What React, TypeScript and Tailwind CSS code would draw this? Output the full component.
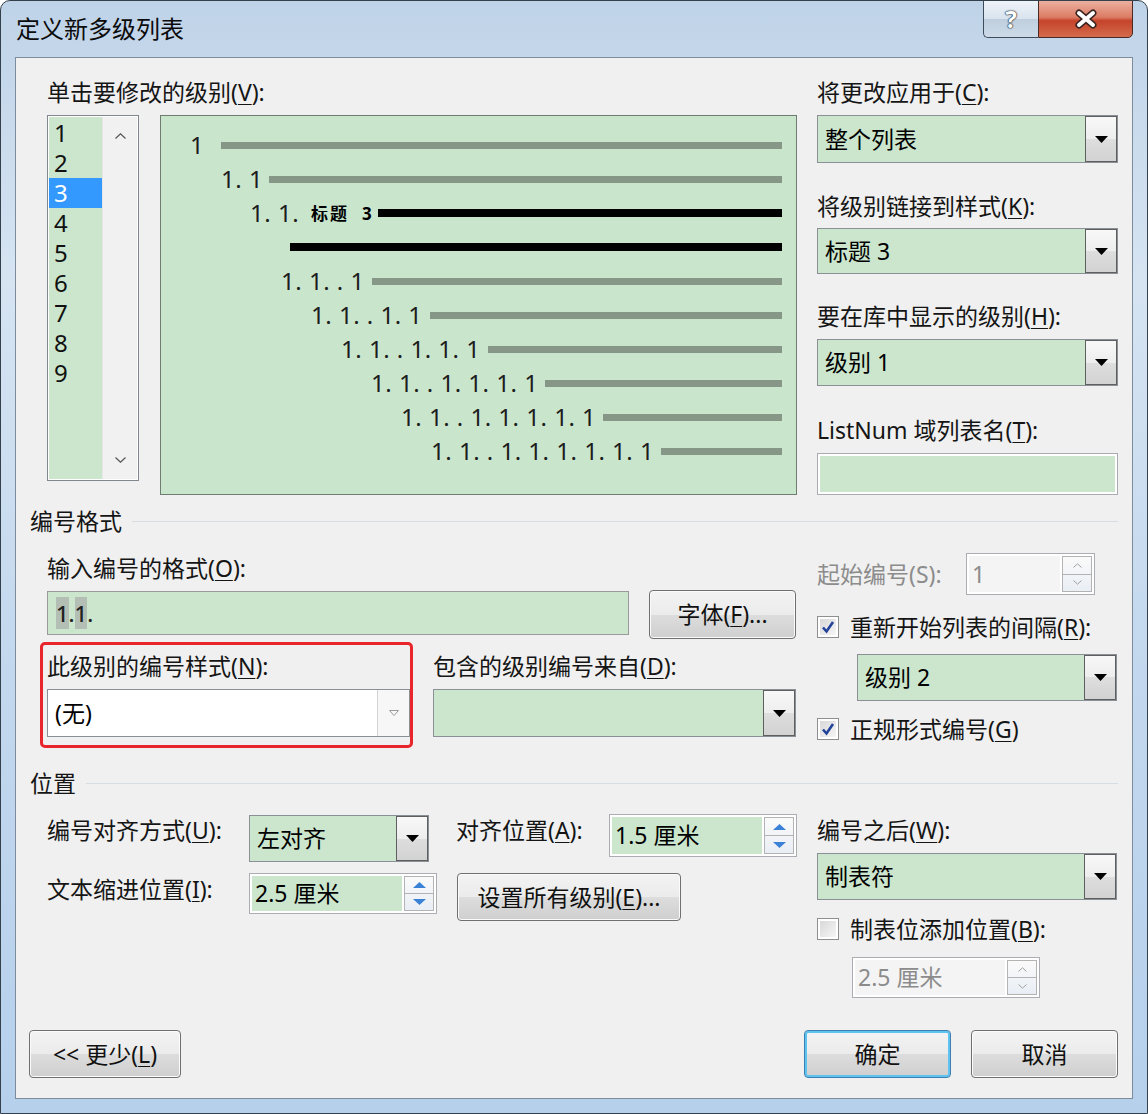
import React from "react";

const M = ({ children }: { children: React.ReactNode }) => (
  <span className="underline decoration-1 underline-offset-[3px]">{children}</span>
);

const Label = ({
  children,
  className = "",
  dim,
}: {
  children: React.ReactNode;
  className?: string;
  dim?: boolean;
}) => (
  <div
    className={
      (dim ? "text-[#8c8c8c] " : "text-[#151515] ") +
      "flex h-[30px] items-center whitespace-nowrap text-[23px] leading-none " +
      className
    }
  >
    {children}
  </div>
);

const DropBtn = ({ disabled }: { disabled?: boolean }) =>
  disabled ? (
    <div className="flex w-[32px] items-center justify-center border-l border-[#d4d4d4] bg-[#f7f7f7]">
      <svg width="10" height="6" viewBox="0 0 10 6">
        <path d="M0.5 0.5h9L5 5.5z" fill="none" stroke="#9a9a9a" strokeWidth="1" />
      </svg>
    </div>
  ) : (
    <div className="flex w-[32px] items-center justify-center border border-[#5f5f5f] bg-[linear-gradient(#f8f8f8,#ededed_50%,#dedede_50%,#d2d2d2)]">
      <svg width="13" height="7" viewBox="0 0 13 7">
        <path d="M0 0h13L6.5 7z" fill="#000" />
      </svg>
    </div>
  );

const Combo = ({
  value,
  className = "",
  white,
}: {
  value: React.ReactNode;
  className?: string;
  white?: boolean;
}) => (
  <div className={"flex border border-[#8b9096] " + className}>
    <div
      className={
        (white ? "bg-white " : "bg-[#cbe6cd] ") +
        "flex flex-1 items-center whitespace-nowrap pl-[7px] text-[23px] leading-none"
      }
    >
      {value}
    </div>
    <DropBtn disabled={white} />
  </div>
);

const Up = ({ disabled }: { disabled?: boolean }) =>
  disabled ? (
    <svg width="9" height="5" viewBox="0 0 9 5">
      <path d="M0.5 4.5L4.5 0.8L8.5 4.5" fill="none" stroke="#a0a0a0" strokeWidth="1" />
    </svg>
  ) : (
    <svg width="13" height="6" viewBox="0 0 13 6">
      <path d="M0 6L6.5 0L13 6z" fill="#3b82d6" />
    </svg>
  );

const Down = ({ disabled }: { disabled?: boolean }) =>
  disabled ? (
    <svg width="9" height="5" viewBox="0 0 9 5">
      <path d="M0.5 0.5L4.5 4.2L8.5 0.5" fill="none" stroke="#a0a0a0" strokeWidth="1" />
    </svg>
  ) : (
    <svg width="13" height="6" viewBox="0 0 13 6">
      <path d="M0 0L13 0L6.5 6z" fill="#3b82d6" />
    </svg>
  );

const Spin = ({
  value,
  className = "",
  disabled,
}: {
  value: string;
  className?: string;
  disabled?: boolean;
}) => (
  <div className={"flex border border-[#abadb3] bg-white p-[2px] " + className}>
    <div
      className={
        (disabled ? "bg-[#f4f4f4] text-[#8c8c8c] " : "bg-[#cbe6cd] text-black ") +
        "flex flex-1 items-center whitespace-nowrap pl-[3px] text-[23px] leading-none"
      }
    >
      {value}
    </div>
    <div className="ml-[2px] flex w-[30px] flex-col border border-[#b3b3b3] bg-[linear-gradient(#fafafa,#e9eef5)]">
      <div className="flex flex-1 items-center justify-center border-b border-[#b3b3b3]">
        <Up disabled={disabled} />
      </div>
      <div className="flex flex-1 items-center justify-center">
        <Down disabled={disabled} />
      </div>
    </div>
  </div>
);

const Check = ({ checked }: { checked?: boolean }) => (
  <div className="flex h-[22px] w-[22px] items-center justify-center border border-[#8e8f8f] bg-white p-[2px]">
    <div className="flex h-full w-full items-center justify-center bg-[linear-gradient(135deg,#d8d8d8,#f6f6f6)]">
      {checked && (
        <svg width="14" height="14" viewBox="0 0 14 14">
          <path d="M2 7.5L5.5 11.5L12 2" fill="none" stroke="#23429a" strokeWidth="2.6" />
        </svg>
      )}
    </div>
  </div>
);

const Btn = ({
  children,
  className = "",
  focus,
}: {
  children: React.ReactNode;
  className?: string;
  focus?: boolean;
}) => (
  <div
    className={
      (focus
        ? "border-[#3c7fb1] shadow-[inset_0_0_0_2px_#5ec3ee] "
        : "border-[#707070] shadow-[inset_0_0_0_1px_#fbfbfb] ") +
      "flex items-center justify-center whitespace-nowrap rounded-[4px] border bg-[linear-gradient(#f3f3f3,#ebebeb_50%,#dddddd_50%,#cfcfcf)] text-[23px] leading-none text-[#111] " +
      className
    }
  >
    {children}
  </div>
);

const Section = ({ title }: { title: string }) => (
  <div className="flex h-[30px] items-center">
    <span className="whitespace-nowrap text-[23px] leading-none text-[#151515]">{title}</span>
    <div className="ml-[10px] h-px flex-1 bg-[#d5dde3]" />
  </div>
);

const levels = ["1", "2", "3", "4", "5", "6", "7", "8", "9"];

const rows = [
  { pl: "pl-[29px]", text: "1", line: "ml-[17px] h-[7px] bg-[#879787]" },
  { pl: "pl-[60px]", text: "1. 1", line: "ml-[6px] h-[7px] bg-[#879787]" },
  { pl: "pl-[89px]", text: "1. 1.", heading: true, line: "ml-[4px] h-[8px] bg-black" },
  { pl: "pl-[129px]", text: "", line: "h-[8px] bg-black" },
  { pl: "pl-[120px]", text: "1. 1. . 1", line: "ml-[7px] h-[7px] bg-[#879787]" },
  { pl: "pl-[150px]", text: "1. 1. . 1. 1", line: "ml-[7px] h-[7px] bg-[#879787]" },
  { pl: "pl-[180px]", text: "1. 1. . 1. 1. 1", line: "ml-[7px] h-[7px] bg-[#879787]" },
  { pl: "pl-[210px]", text: "1. 1. . 1. 1. 1. 1", line: "ml-[7px] h-[7px] bg-[#879787]" },
  { pl: "pl-[240px]", text: "1. 1. . 1. 1. 1. 1. 1", line: "ml-[7px] h-[7px] bg-[#879787]" },
  { pl: "pl-[270px]", text: "1. 1. . 1. 1. 1. 1. 1. 1", line: "ml-[7px] h-[7px] bg-[#879787]" },
];

const ListBox = () => (
  <div className="flex h-[366px] w-[92px] border border-[#82878f] bg-white p-[1px]">
    <div className="w-[53px] bg-[#cbe6cd] pt-[1px]">
      {levels.map((n) => (
        <div
          key={n}
          className={
            n === "3"
              ? "h-[30px] bg-[#3399ff] pl-[5px] text-[24px] leading-[30px] text-white"
              : "h-[30px] pl-[5px] text-[24px] leading-[30px] text-[#111]"
          }
        >
          {n}
        </div>
      ))}
    </div>
    <div className="flex flex-1 flex-col items-center justify-between border-l border-[#e6e6e6] bg-[#f1f1f1] pb-[16px] pt-[16px]">
      <svg width="11" height="6" viewBox="0 0 11 6">
        <path d="M0.5 5.5L5.5 0.8L10.5 5.5" fill="none" stroke="#555" strokeWidth="1.2" />
      </svg>
      <svg width="11" height="6" viewBox="0 0 11 6">
        <path d="M0.5 0.5L5.5 5.2L10.5 0.5" fill="none" stroke="#555" strokeWidth="1.2" />
      </svg>
    </div>
  </div>
);

const Preview = () => (
  <div className="h-[380px] w-[637px] border border-[#6f7c72] bg-[#c9e6cc] pr-[14px] pt-[12px]">
    {rows.map((r, i) => (
      <div key={i} className={"flex h-[34px] items-center " + r.pl}>
        {r.text && (
          <span className="whitespace-pre text-[24px] leading-none tracking-[0.5px] text-[#1c1c1c]">
            {r.text}
          </span>
        )}
        {r.heading && (
          <span className="ml-[12px] whitespace-pre text-[17px] font-bold leading-none tracking-[2px] text-black">
            标题  3
          </span>
        )}
        <div className={"flex-1 " + r.line} />
      </div>
    ))}
  </div>
);

export default function App() {
  return (
    <div className="relative h-[1114px] w-[1148px] overflow-hidden rounded-t-[10px] border border-[#34404c] bg-[linear-gradient(180deg,#bfd3e8,#d6e4f2_25%,#c3d8ee_60%,#b6d0ec)] font-['Noto_Sans','Noto_Sans_CJK_SC',sans-serif] text-black">
      <div className="flex h-[56px] items-start justify-between">
        <div className="pl-[15px] pt-[13px] text-[24px] leading-[30px] text-[#0b0b0b]">定义新多级列表</div>
        <div className="-mt-px mr-[14px] flex h-[38px]">
          <div className="flex w-[55px] items-center justify-center rounded-bl-[5px] border border-r-0 border-[#3f4b58] bg-[linear-gradient(#eef3f8,#d9e3ee_50%,#bfcedd_50%,#cddbe9)]">
            <span className="text-[24px] font-bold leading-none text-white [text-shadow:0_0_2px_#1d2a38,0_0_1px_#1d2a38,0_0_1px_#1d2a38]">
              ?
            </span>
          </div>
          <div className="flex w-[95px] items-center justify-center rounded-br-[5px] border border-[#4a2a24] bg-[linear-gradient(#ecb0a0,#dc7c64_45%,#c5432a_55%,#d46c4c)]">
            <svg width="26" height="20" viewBox="0 0 26 20">
              <path d="M6 4L20 16M20 4L6 16" stroke="#3a2420" strokeWidth="7" strokeLinecap="round" />
              <path d="M6 4L20 16M20 4L6 16" stroke="#fff" strokeWidth="4" strokeLinecap="round" />
            </svg>
          </div>
        </div>
      </div>

      <div className="mx-[14px] flex h-[1042px] flex-col border border-[#7d8c9c] bg-[#f0f0f0] pl-[14px] pr-[14px]">
        {/* top: levels + preview + right column */}
        <div className="mt-[19px] flex pl-[17px]">
          <div className="w-[750px]">
            <Label>
              单击要修改的级别(<M>V</M>):
            </Label>
            <div className="mt-[8px] flex items-start gap-[21px]">
              <ListBox />
              <Preview />
            </div>
          </div>
          <div className="ml-[20px] w-[301px]">
            <Label>
              将更改应用于(<M>C</M>):
            </Label>
            <Combo value="整个列表" className="mt-[8px] h-[48px] w-[301px]" />
            <Label className="mt-[28px]">
              将级别链接到样式(<M>K</M>):
            </Label>
            <Combo value="标题 3" className="mt-[7px] h-[46px] w-[301px]" />
            <Label className="mt-[27px]">
              要在库中显示的级别(<M>H</M>):
            </Label>
            <Combo value="级别 1" className="mt-[8px] h-[47px] w-[301px]" />
            <Label className="mt-[29px]">
              ListNum 域列表名(<M>T</M>):
            </Label>
            <div className="mt-[8px] h-[42px] w-[301px] border border-[#a9abb0] bg-white p-[2px]">
              <div className="h-full w-full bg-[#cbe6cd]" />
            </div>
          </div>
        </div>

        <div className="mt-[11px]">
          <Section title="编号格式" />
        </div>

        <div className="mt-[17px] flex pl-[17px]">
          <div className="w-[750px]">
            <Label>
              输入编号的格式(<M>O</M>):
            </Label>
            <div className="mt-[7px] flex items-start">
              <div className="mt-[1px] flex h-[44px] w-[582px] items-center border border-[#9a9a9a] bg-[#cbe6cd] pl-[8px] text-[22px] font-medium leading-none text-[#222]">
                <span className="bg-[#b3bfb4] py-[5px]">1</span>
                <span>.</span>
                <span className="bg-[#b3bfb4] py-[5px]">1</span>
                <span>.</span>
              </div>
              <Btn className="ml-[20px] h-[49px] w-[147px]">
                字体(<M>F</M>)...
              </Btn>
            </div>
            <div className="mt-[3px] flex items-start">
              <div className="-ml-[7px] h-[106px] w-[373px] rounded-[5px] border-[3px] border-[#e8262b] pl-[4px] pt-[6px]">
                <Label>
                  此级别的编号样式(<M>N</M>):
                </Label>
                <Combo white value="(无)" className="mt-[8px] h-[48px] w-[363px]" />
              </div>
              <div className="ml-[20px] pt-[9px]">
                <Label>
                  包含的级别编号来自(<M>D</M>):
                </Label>
                <Combo value="" className="mt-[8px] h-[48px] w-[363px]" />
              </div>
            </div>
          </div>
          <div className="ml-[20px] w-[301px]">
            <div className="flex h-[42px] items-center">
              <Label dim className="w-[149px]">
                起始编号(S):
              </Label>
              <Spin disabled value="1" className="h-[42px] w-[129px]" />
            </div>
            <div className="mt-[17px] flex h-[30px] items-center">
              <Check checked />
              <Label className="ml-[11px]">
                重新开始列表的间隔(<M>R</M>):
              </Label>
            </div>
            <Combo value="级别 2" className="ml-[40px] mt-[12px] h-[47px] w-[260px]" />
            <div className="mt-[13px] flex h-[30px] items-center">
              <Check checked />
              <Label className="ml-[11px]">
                正规形式编号(<M>G</M>)
              </Label>
            </div>
          </div>
        </div>

        <div className="mt-[20px]">
          <Section title="位置" />
        </div>

        <div className="mt-[16px] flex pl-[17px]">
          <div className="w-[750px]">
            <div className="flex items-start">
              <Label className="mt-[1px] w-[202px]">
                编号对齐方式(<M>U</M>):
              </Label>
              <Combo value="左对齐" className="mt-[1px] h-[47px] w-[180px]" />
              <Label className="ml-[27px] mt-[1px] w-[153px]">
                对齐位置(<M>A</M>):
              </Label>
              <Spin value="1.5 厘米" className="h-[43px] w-[188px]" />
            </div>
            <div className="mt-[11px] flex items-start">
              <Label className="mt-[1px] w-[202px]">
                文本缩进位置(<M>I</M>):
              </Label>
              <Spin value="2.5 厘米" className="h-[41px] w-[188px]" />
              <Btn className="ml-[20px] h-[48px] w-[224px]">
                设置所有级别(<M>E</M>)...
              </Btn>
            </div>
          </div>
          <div className="ml-[20px] w-[301px]">
            <Label className="mt-[1px]">
              编号之后(<M>W</M>):
            </Label>
            <Combo value="制表符" className="mt-[8px] h-[47px] w-[300px]" />
            <div className="mt-[14px] flex h-[30px] items-center">
              <Check />
              <Label className="ml-[11px]">
                制表位添加位置(<M>B</M>):
              </Label>
            </div>
            <Spin disabled value="2.5 厘米" className="ml-[35px] mt-[13px] h-[41px] w-[188px]" />
          </div>
        </div>

        <div className="mb-[20px] mt-auto flex items-center">
          <Btn className="-ml-px h-[48px] w-[152px]">
            &lt;&lt; 更少(<M>L</M>)
          </Btn>
          <div className="flex-1" />
          <Btn focus className="h-[48px] w-[147px]">
            确定
          </Btn>
          <Btn className="ml-[20px] h-[48px] w-[147px]">取消</Btn>
        </div>
      </div>
    </div>
  );
}
